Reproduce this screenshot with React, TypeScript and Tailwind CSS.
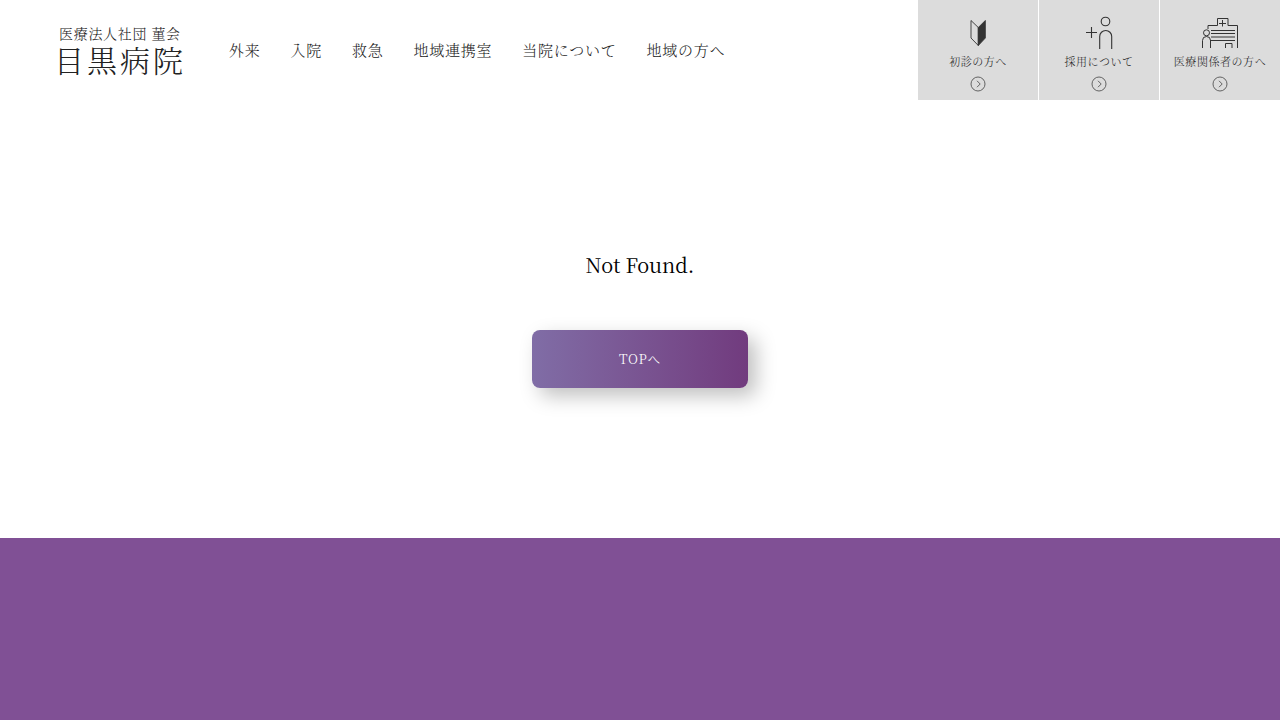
import type { ReactNode } from "react";

const navItems = ["外来", "入院", "救急", "地域連携室", "当院について", "地域の方へ"];

const BeginnerIcon = () => (
    <svg width="40" height="40" viewBox="0 0 40 40" fill="none" stroke="#333" strokeWidth="0.9" aria-hidden="true">
        <path d="M13 10.5 20.3 17.5V35.5L13 28Z" />
        <path d="M27.3 10.5 20.3 17.5V35.5L27.3 28Z" fill="#333" />
    </svg>
);

const RecruitIcon = () => (
    <svg width="40" height="40" viewBox="0 0 40 40" fill="none" stroke="#333" strokeWidth="1.1" aria-hidden="true">
        <circle cx="26.5" cy="11.5" r="4.3" />
        <path d="M20.7 39V26.5a6 6 0 0 1 12 0V39" />
        <path d="M7 22.5h11M12.5 17v11" />
    </svg>
);

const HospitalIcon = () => (
    <svg width="40" height="40" viewBox="0 0 40 40" fill="none" stroke="#333" strokeWidth="1" aria-hidden="true">
        <path d="M8 19V15.5h9.5V8.5h10.5v7h9.5V38" />
        <path d="M22.5 10v6.5M19 13.5h7" />
        <circle cx="6.5" cy="22.8" r="3" />
        <path d="M2.5 38v-7.5a4 4 0 0 1 8 0V38" />
        <path d="M11 20.5h24M11 23.5h24M11 27h24M10 30.5h25M25.5 38v-4.5h6.5V38" />
    </svg>
);

const CircleArrow = () => (
    <svg width="16" height="16" viewBox="0 0 16 16" fill="none" stroke="#555" strokeWidth="0.9" aria-hidden="true">
        <circle cx="8" cy="8" r="7" />
        <path d="M7 4.8l3.2 3.2L7 11.2" />
    </svg>
);

const Shortcut = ({ label, icon }: { label: string; icon: ReactNode }) => (
    <a href="#" className="flex w-30 flex-col items-center bg-[#dcdcdc] pt-2.5">
        {icon}
        <span className="mt-1 text-[11px] leading-4 tracking-wider whitespace-nowrap">{label}</span>
        <span className="mt-1.5">
            <CircleArrow />
        </span>
    </a>
);

const App = () => {
    return (
        <div className="flex min-h-screen flex-col bg-white font-['Liberation_Serif','Noto_Serif_CJK_JP','Noto_Sans_CJK_JP',serif] font-light text-[#222]">
            <header className="flex h-25 items-stretch justify-between">
                <div className="flex items-center gap-[43px] pt-0.5 pl-[54px]">
                    <a href="#" className="flex flex-col pt-0.5 whitespace-nowrap">
                        <span className="pl-[5px] text-[14px] leading-5 tracking-wider">医療法人社団 菫会</span>
                        <span className="text-[30px] leading-[34px] tracking-widest">目黒病院</span>
                    </a>
                    <nav>
                        <ul className="flex gap-[30px] text-[15px] leading-6 tracking-wider whitespace-nowrap">
                            {navItems.map((item) => (
                                <li key={item}>
                                    <a href="#">{item}</a>
                                </li>
                            ))}
                        </ul>
                    </nav>
                </div>
                <div className="flex gap-px">
                    <Shortcut label="初診の方へ" icon={<BeginnerIcon />} />
                    <Shortcut label="採用について" icon={<RecruitIcon />} />
                    <Shortcut label="医療関係者の方へ" icon={<HospitalIcon />} />
                </div>
            </header>

            <main className="flex flex-col items-center py-[150px] font-['Noto_Serif_CJK_JP','Noto_Sans_CJK_JP','Liberation_Serif',serif]">
                <h1 className="text-[20px] leading-[30px] font-normal text-black">Not Found.</h1>
                <a
                    href="#"
                    className="mt-[50px] flex h-[58px] w-54 items-center justify-center rounded-lg bg-linear-to-r from-[#806da6] to-[#713b7e] text-[13px] tracking-wider text-white shadow-[8px_8px_20px_rgba(0,0,0,0.25)]"
                >
                    TOPへ
                </a>
            </main>

            <footer className="min-h-40 flex-1 bg-[#805095]" />
        </div>
    );
};

export default App;
